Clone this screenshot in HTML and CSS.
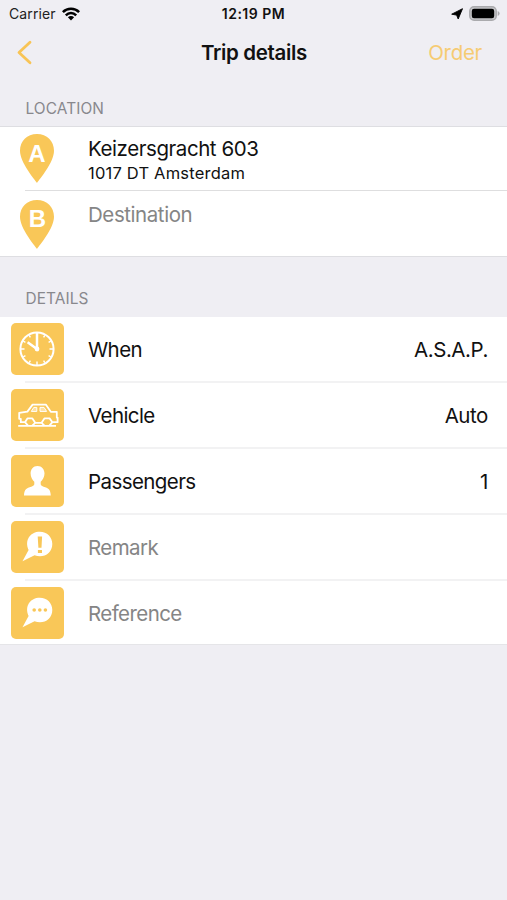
FILE: index.html
```
<!DOCTYPE html>
<html lang="en">
<head>
<meta charset="utf-8">
<title>Trip details</title>
<link rel="stylesheet" href="styles.css">
</head>
<body>
<div class="status">
  <div class="status-left"><span class="carrier">Carrier</span>
    <svg class="wifi" width="18" height="14" viewBox="0 0 18 14"><g fill="none" stroke="#000" stroke-width="2.5"><path d="M.9 5.2C5.3.7 12.7.7 17.1 5.2"/><path d="M3.8 8.3C6.8 5.3 11.2 5.3 14.2 8.3"/></g><path d="M5.9 10.3C7.7 8.7 10.3 8.7 12.1 10.3L9 13.6Z"/></svg>
  </div>
  <span class="clock">12:19 PM</span>
  <div class="status-right">
    <svg width="12" height="12" viewBox="0 0 12 12"><path d="M11.5.7L7.2 11L5.6 7.1L.7 6.2Z" stroke="#000" stroke-width=".9" stroke-linejoin="round"/></svg>
    <svg class="battery" width="32" height="15" viewBox="0 0 32 15"><rect x=".8" y=".8" width="26.4" height="13.4" rx="4.3" fill="#c8c8cb" stroke="#aaaaad" stroke-width="1.5"/><rect x="2.8" y="2.8" width="22.4" height="9.4" rx="2.2"/><path d="M28.7 5V10Q30.6 9.3 30.6 7.5T28.7 5Z" fill="#aaaaad"/></svg>
  </div>
</div>
<header class="nav">
  <svg class="back" width="16" height="25" viewBox="0 0 16 25"><path d="M14 2.2L3 12.5L14 22.8" fill="none" stroke="#f8c456" stroke-width="2.8" stroke-linecap="round" stroke-linejoin="round"/></svg>
  <h1 class="title">Trip details</h1>
  <span class="order">Order</span>
</header>
<h2 class="section location-title">LOCATION</h2>
<section class="card location">
  <div class="place">
    <svg class="pin" width="36" height="51" viewBox="0 0 36 51"><path d="M18 50C15.4 46.2 1 29.5 1 17.8C1 8 8 1 18 1S35 8 35 17.8C35 29.5 20.6 46.2 18 50Z" fill="#f9c758"/><text class="pin-letter" x="18" y="28.5">A</text></svg>
    <div class="address"><div class="street">Keizersgracht 603</div><div class="city">1017 DT Amsterdam</div></div>
  </div>
  <div class="place">
    <svg class="pin" width="36" height="51" viewBox="0 0 36 51"><path d="M18 50C15.4 46.2 1 29.5 1 17.8C1 8 8 1 18 1S35 8 35 17.8C35 29.5 20.6 46.2 18 50Z" fill="#f9c758"/><text class="pin-letter" x="18.5" y="28">B</text></svg>
    <div class="address"><div class="street destination">Destination</div></div>
  </div>
</section>
<h2 class="section details-title">DETAILS</h2>
<section class="card details">
  <div class="row">
    <svg class="icon" viewBox="0 0 53 52"><g fill="none" stroke="#fff"><circle cx="26" cy="26" r="16.6" stroke-width="2"/><g stroke-width="1.4"><path d="M26 38.5V42M10 26H13.5M38.5 26H42M18.2 39.7l1.2-2.1M33.8 39.7l-1.2-2.1M12.3 33.8l2.1-1.2M39.7 33.8l-2.1-1.2M12.3 18.2l2.1 1.2M39.7 18.2l-2.1 1.2M18.2 12.3l1.2 2.1M33.8 12.3l-1.2 2.1"/></g><path d="M26 10V26L16.6 19.2" stroke-width="2.5"/></g><circle cx="26" cy="26" r="2.4" fill="#fff"/></svg>
    <span class="label when">When</span><span class="value asap">A.S.A.P.</span>
  </div>
  <div class="row">
    <svg class="icon" viewBox="0 0 53 52"><g fill="none" stroke="#fff" stroke-width="1.8" stroke-linejoin="round"><path d="M14 33.2H9.8V29.8H8.2V23.8L16.4 22.6L21.6 15.6H34.8L39.8 22.8H45.8V28.6H46.6V33.2H41.4L38.6 29.4H33.4L30.6 33.8H24.2L21.4 29.4H16.4L14 33.2L17 36.6M24.2 33.8L21.2 36.6M30.6 33.8L33.4 36.6M41.4 33.2L38.4 36.6"/><path d="M7.2 36.8H45"/></g><path d="M22.8 18.4H25.8V22.4H20.3ZM29 18.4H33L35.6 22.4H29Z" fill="#fff" fill-opacity=".45" stroke="#fff" stroke-width="1"/></svg>
    <span class="label vehicle">Vehicle</span><span class="value auto">Auto</span>
  </div>
  <div class="row">
    <svg class="icon" viewBox="0 0 53 52"><path d="M26.5 11C22.2 11 19.6 14.5 19.6 18.5C19.6 22 21.4 25.1 23.3 26.8V29.5Q22.8 31 20.3 31.8C15.7 33 13.2 34.2 13 40.6H39.8C39.6 34.2 37.2 33 32.6 31.8Q30.1 31 29.7 29.5V26.8C31.6 25.1 33.5 22 33.5 18.5C33.5 14.5 30.8 11 26.5 11Z" fill="#fff"/></svg>
    <span class="label passengers">Passengers</span><span class="value">1</span>
  </div>
  <div class="row">
    <svg class="icon" viewBox="0 0 53 52"><path d="M11.5 40.2L17.6 29C13.2 19 19.5 10.8 28.8 10.8C36.2 10.8 41.3 16.3 41.3 23C41.3 32.6 32 37.8 23.5 34.2Z" fill="#fff"/><path d="M26.7 15.5H31.1L30.5 26.8H27.4ZM26.9 28.9H31V32.1H26.9Z" fill="#f9c758"/></svg>
    <span class="label remark">Remark</span>
  </div>
  <div class="row">
    <svg class="icon" viewBox="0 0 53 52"><path d="M11.5 40.2L17.6 29C13.2 19 19.5 10.8 28.8 10.8C36.2 10.8 41.3 16.3 41.3 23C41.3 32.6 32 37.8 23.5 34.2Z" fill="#fff"/><g fill="#f9c758"><circle cx="23.2" cy="23" r="1.8"/><circle cx="28.8" cy="23" r="1.8"/><circle cx="34.4" cy="23" r="1.8"/></g></svg>
    <span class="label reference">Reference</span>
  </div>
</section>
</body>
</html>
```
FILE: styles.css
```
* { box-sizing: border-box; }
body { margin: 0; min-height: 900px; background: #efeef3; color: #111; font-family: Inter, "Liberation Sans", sans-serif; }
svg { display: block; flex: none; }
.status { height: 27px; display: grid; grid-template-columns: 1fr auto 1fr; align-items: center; padding: 0 6px; }
.status-left, .status-right { display: flex; align-items: center; }
.status-left { gap: 6px; padding-left: 3px; }
.status-right { justify-content: flex-end; gap: 6px; }
.carrier { font-size: 14px; letter-spacing: .1px; color: #222; }
.clock { font-size: 14px; font-weight: 600; letter-spacing: .5px; }
.nav { height: 50px; display: grid; grid-template-columns: 1fr auto 1fr; align-items: center; padding: 0 25px 0 16px; }
.title { margin: 0; position: relative; left: 5px; font-size: 20.5px; font-weight: 600; letter-spacing: -.35px; }
.order { justify-self: end; font-size: 20.5px; letter-spacing: -.3px; color: #f6cb73; }
.section { margin: 0; padding-left: 25.5px; font-size: 15.4px; line-height: 18px; letter-spacing: .1px; font-weight: 400; color: #88888d; }
.location-title { height: 49px; padding-top: 23px; }
.details-title { height: 60px; padding-top: 33px; }
.card { background: #fff; }
.location { height: 131px; border-top: 1px solid #dedee2; border-bottom: 1px solid #dedee2; }
.place { display: flex; height: 64px; padding: 6px 0 0 19px; gap: 33px; background: linear-gradient(#dededf, #dededf) 25px 100% / 100% 1px no-repeat; }
.place:last-child { background: none; padding-top: 8px; }
.address { padding-top: 4px; }
.street, .label, .value { font-size: 20.5px; line-height: 24px; letter-spacing: -.43px; }
.label { letter-spacing: -.58px; }
.city { font-size: 16.5px; line-height: 24px; letter-spacing: .2px; }
.destination, .remark, .reference { color: #858585; }
.pin-letter { font: 700 24px "Liberation Sans", sans-serif; fill: #fff; text-anchor: middle; }
.row { display: flex; align-items: center; height: 66px; padding: 0 19px 2px 11px; background: linear-gradient(#f2f2f3, #f2f2f3) 25px 100% / 100% 2px no-repeat; }
.row:last-child { background: none; }
.details { height: 328px; border-bottom: 1px solid #e5e5e8; }
.icon { width: 53px; height: 52px; background: #f9c758; border-radius: 5px; margin-right: 24px; }
.label, .value { padding-top: 2px; }
.value { margin-left: auto; }
```
